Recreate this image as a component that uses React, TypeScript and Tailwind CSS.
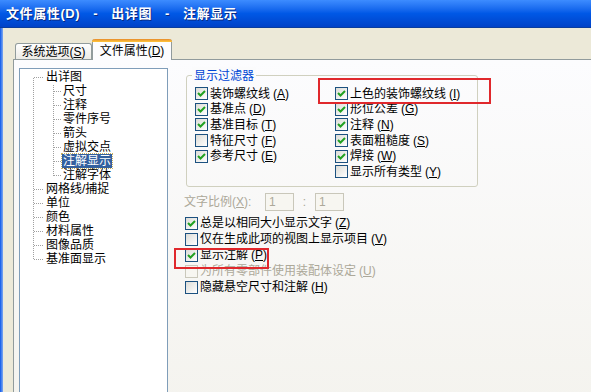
import type { ReactNode } from 'react'

const font = { fontFamily: '"Liberation Sans", "Noto Sans CJK SC", sans-serif' }

const Key = ({ k, disabled }: { k: string; disabled?: boolean }) => (
  <span className={disabled ? 'ml-[3px] text-[#ACA899]' : 'ml-[3px]'}>
    (<u>{k}</u>)
  </span>
)

const Check = ({ checked, disabled }: { checked?: boolean; disabled?: boolean }) => (
  <span
    className={
      disabled
        ? 'w-[13px] h-[13px] shrink-0 border border-[#CAC8BB] bg-[#F7F6F1]'
        : 'w-[13px] h-[13px] shrink-0 border border-[#1C5180] bg-gradient-to-br from-[#DCDCD7] to-white flex items-center justify-center'
    }
  >
    {checked && (
      <svg width="11" height="11" viewBox="0 0 11 11">
        <polyline points="2,5 4.5,7.5 9,3" fill="none" stroke="#21A121" strokeWidth="2" />
      </svg>
    )}
  </span>
)

interface IOptProps {
  label: string
  k: string
  checked?: boolean
  disabled?: boolean
  h: string
}

const Opt = ({ label, k, checked, disabled, h }: IOptProps) => (
  <div className={`flex items-center gap-[2px] ${h}`}>
    <Check checked={checked} disabled={disabled} />
    <span className={`whitespace-nowrap ${disabled ? 'text-[#ACA899]' : 'text-black'}`}>
      {label}
      <Key k={k} disabled={disabled} />
    </span>
  </div>
)

const treeItems: { label: string; child?: boolean; selected?: boolean }[] = [
  { label: '出详图' },
  { label: '尺寸', child: true },
  { label: '注释', child: true },
  { label: '零件序号', child: true },
  { label: '箭头', child: true },
  { label: '虚拟交点', child: true },
  { label: '注解显示', child: true, selected: true },
  { label: '注解字体', child: true },
  { label: '网格线/捕捉' },
  { label: '单位' },
  { label: '颜色' },
  { label: '材料属性' },
  { label: '图像品质' },
  { label: '基准面显示' },
]

const TreeLines = () => {
  const roots = treeItems.map((t, i) => (t.child ? -1 : i)).filter((i) => i >= 0)
  const kids = treeItems.map((t, i) => (t.child ? i : -1)).filter((i) => i >= 0)
  const cy = (i: number) => 8.5 + 14 * i
  return (
    <svg className="absolute inset-0" width="147" height="340" shapeRendering="crispEdges">
      <g stroke="#A0A0A0" strokeDasharray="1 1" fill="none">
        <line x1="13.5" y1={cy(0)} x2="13.5" y2={cy(13)} />
        {roots.map((i) => (
          <line key={i} x1="14" y1={cy(i)} x2="24" y2={cy(i)} />
        ))}
        <line x1="33.5" y1={cy(0) + 7} x2="33.5" y2={cy(7)} />
        {kids.map((i) => (
          <line key={i} x1="34" y1={cy(i)} x2="42" y2={cy(i)} />
        ))}
      </g>
    </svg>
  )
}

const Tree = () => (
  <div className="relative w-[149px] h-[340px] shrink-0 border border-[#7F9DB9] bg-white pt-[1px]">
    <TreeLines />
    {treeItems.map((t) => (
      <div key={t.label} className={`relative h-[14px] flex items-center ${t.child ? 'pl-[42px]' : 'pl-[25px]'}`}>
        <span
          className={`px-[1px] h-[14px] leading-[14px] whitespace-nowrap ${
            t.selected ? 'bg-[#33609F] text-white outline-1 outline-dotted outline-[#C8B060]' : 'text-black'
          }`}
        >
          {t.label}
        </span>
      </div>
    ))}
  </div>
)

const Box = ({ children }: { children: ReactNode }) => (
  <div className="w-[29px] h-[18px] border border-[#C9C7BA] bg-[#F7F6F1] pl-[3px] text-[#ACA899] leading-[16px]">
    {children}
  </div>
)

export default function App() {
  return (
    <div className="relative w-[591px] h-[392px] overflow-hidden flex flex-col bg-[#ECE9D8] text-[12px]" style={font}>
      <div className="h-[28px] shrink-0 flex items-center pl-[6px] bg-gradient-to-b from-[#3D8CFF] via-[#0058E6] to-[#0042C8] border-b border-[#0A3D9E] text-white font-bold text-[13px] tracking-[0.6px] [text-shadow:1px_1px_#0A2A80]">
        <span>文件属性(D)</span>
        <span className="mx-[13px]">-</span>
        <span>出详图</span>
        <span className="mx-[13px]">-</span>
        <span>注解显示</span>
      </div>
      <div className="flex-1 flex min-h-0">
        <div className="w-[3px] shrink-0 bg-gradient-to-r from-[#0055EA] to-[#7FA8EE]" />
        <div className="flex-1 flex flex-col pl-[10px] min-w-0">
          <div className="h-[31px] shrink-0 flex items-end pl-[2px]">
            <div className="w-[77px] h-[16px] border border-b-0 border-[#919B9C] rounded-t-[3px] bg-gradient-to-b from-white to-[#ECEBE6] flex items-center justify-center text-black">
              系统选项(<u>S</u>)
            </div>
            <div className="relative z-10 -mb-px w-[80px] h-[21px] border-x border-[#919B9C] rounded-t-[3px] bg-[#FCFCFE] flex flex-col">
              <div className="h-[3px] -mx-px rounded-t-[3px] bg-gradient-to-b from-[#E68B2C] to-[#FFC73C]" />
              <div className="flex-1 flex items-center justify-center text-black">
                文件属性(<u>D</u>)
              </div>
            </div>
          </div>
          <div className="flex-1 flex items-start border-l border-t border-[#919B9C] bg-gradient-to-b from-[#FCFCFE] to-[#F4F3EE] pl-[5px] pt-[8px]">
            <Tree />
            <div className="ml-[16px] flex flex-col">
              <div className="relative ml-[2px] mt-[7px] w-[292px] h-[112px] border border-[#D0D0BF] rounded-[3px] pl-[8px] pt-[10px] flex">
                <span className="absolute -top-[9px] left-[5px] px-[2px] bg-[#FBFBFC] text-[#0046D5]">显示过滤器</span>
                <div className="w-[140px] flex flex-col">
                  <Opt h="h-[15.6px]" label="装饰螺纹线" k="A" checked />
                  <Opt h="h-[15.6px]" label="基准点" k="D" checked />
                  <Opt h="h-[15.6px]" label="基准目标" k="T" checked />
                  <Opt h="h-[15.6px]" label="特征尺寸" k="F" />
                  <Opt h="h-[15.6px]" label="参考尺寸" k="E" checked />
                </div>
                <div className="flex flex-col">
                  <Opt h="h-[15.6px]" label="上色的装饰螺纹线" k="I" checked />
                  <Opt h="h-[15.6px]" label="形位公差" k="G" checked />
                  <Opt h="h-[15.6px]" label="注释" k="N" checked />
                  <Opt h="h-[15.6px]" label="表面粗糙度" k="S" checked />
                  <Opt h="h-[15.6px]" label="焊接" k="W" checked />
                  <Opt h="h-[15.6px]" label="显示所有类型" k="Y" />
                </div>
              </div>
              <div className="mt-[6px] flex items-center h-[18px]">
                <span className="w-[81px] text-[#ACA899] whitespace-nowrap">
                  文字比例(<u>X</u>):
                </span>
                <Box>1</Box>
                <span className="w-[21px] text-center text-[#ACA899]">:</span>
                <Box>1</Box>
              </div>
              <div className="mt-[4px] ml-[1px] flex flex-col">
                <Opt h="h-[16px]" label="总是以相同大小显示文字" k="Z" checked />
                <Opt h="h-[16px]" label="仅在生成此项的视图上显示项目" k="V" />
                <Opt h="h-[16px]" label="显示注解" k="P" checked />
                <Opt h="h-[16px]" label="为所有零部件使用装配体设定" k="U" disabled />
                <Opt h="h-[16px]" label="隐藏悬空尺寸和注解" k="H" />
              </div>
            </div>
          </div>
        </div>
      </div>
      <div className="absolute left-[318px] top-[78px] w-[173px] h-[26px] border-2 border-[#E0282C]" />
      <div className="absolute left-[174px] top-[248px] w-[95px] h-[21px] border-2 border-[#E0282C]" />
    </div>
  )
}
